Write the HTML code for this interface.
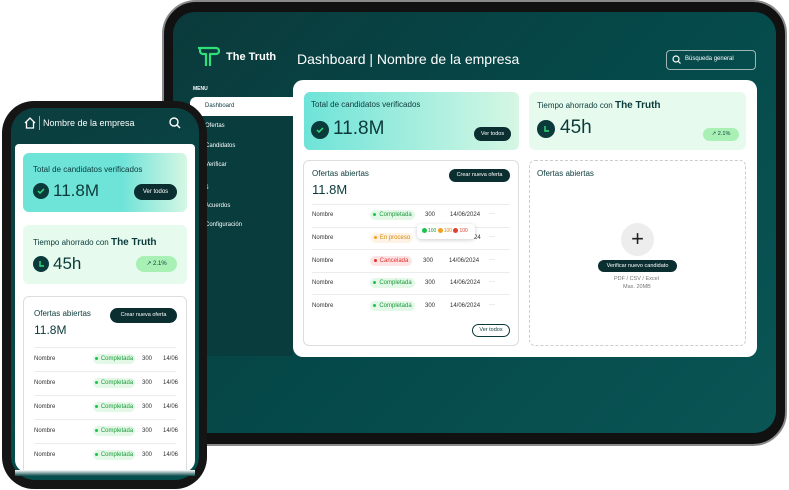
<!DOCTYPE html>
<html><head><meta charset="utf-8"><style>
*{margin:0;padding:0;box-sizing:border-box}
body{width:789px;height:490px;background:#fff;position:relative;overflow:hidden;font-family:"Liberation Sans",sans-serif;}
.a{position:absolute}
.t{position:absolute;white-space:nowrap}
.pill{position:absolute;border-radius:10px;font-size:6px;text-align:center;line-height:10px;height:10px}
.dot{display:inline-block;width:3px;height:3px;border-radius:50%;margin-right:3px;vertical-align:middle}
.row{position:absolute;left:8px;right:8px;height:1px;background:#ececec}
.rt{position:absolute;font-size:6px;color:#333}
</style></head><body>
<!-- tablet -->
<div class="a" style="left:162px;top:0;width:625px;height:446px;border-radius:34px;background:#111;border:2px solid #8a8a8a"></div>
<div class="a" style="left:173px;top:12px;width:603px;height:421px;border-radius:22px;background:linear-gradient(135deg,#0b3a3b 0%,#05494a 50%,#0a5555 100%)"></div>
<!-- logo -->
<svg class="a" style="left:196px;top:46px" width="24" height="22" viewBox="0 0 24 22"><path d="M2 2h18a3 3 0 0 1 0 6h-6v12M4 2v3a3 3 0 0 0 3 3h3v12" fill="none" stroke="#2fe07a" stroke-width="2.2" stroke-linejoin="round"/></svg>
<div class="t" style="left:226px;top:51px;font-size:11px;color:#fff;font-weight:bold">The Truth</div>
<div class="t" style="left:297px;top:51px;font-size:14px;color:#fff">Dashboard | Nombre de la empresa</div>
<div class="a" style="left:666px;top:50px;width:90px;height:20px;border:1px solid #9fb6b5;border-radius:4px"></div>
<svg class="a" style="left:672px;top:55px" width="9" height="9"><circle cx="4" cy="4" r="3" fill="none" stroke="#fff" stroke-width="1.2"/><path d="M6 6l2.5 2.5" stroke="#fff" stroke-width="1.2"/></svg>
<div class="t" style="left:685px;top:56px;font-size:6px;color:#fff">Búsqueda general</div>
<!-- sidebar -->
<div class="t" style="left:193px;top:86px;font-size:5px;color:#fff;font-weight:bold">MENU</div>
<div class="a" style="left:190px;top:116px;width:103px;height:240px;background:#083c3d;border-radius:4px"></div>
<div class="a" style="left:190px;top:97px;width:106px;height:19px;background:#fff;border-radius:6px 0 0 6px"></div>
<div class="t" style="left:205px;top:103px;font-size:6px;color:#0b3a3b">Dashboard</div>
<div class="t" style="left:205px;top:123px;font-size:6px;color:#fff">Ofertas</div>
<div class="t" style="left:205px;top:143px;font-size:6px;color:#fff">Candidatos</div>
<div class="t" style="left:205px;top:162px;font-size:6px;color:#fff">Verificar</div>
<div class="t" style="left:205px;top:185px;font-size:6px;color:#fff">$</div>
<div class="t" style="left:205px;top:203px;font-size:6px;color:#fff">Acuerdos</div>
<div class="t" style="left:205px;top:222px;font-size:6px;color:#fff">Configuración</div>
<!-- main panel -->
<div class="a" style="left:293px;top:80px;width:464px;height:277px;background:#fff;border-radius:10px"></div>
<div class="a" style="left:304px;top:92px;width:215px;height:58px;border-radius:6px;background:linear-gradient(90deg,#6ee3d8,#d6f7e4)"></div>
<div class="t" style="left:311px;top:100px;font-size:8px;color:#0b3a3b">Total de candidatos verificados</div>
<div class="a" style="left:311px;top:121px;width:18px;height:18px;border-radius:50%;background:#0b3a3b"></div>
<svg class="a" style="left:315px;top:125px" width="10" height="10"><path d="M2 5l2 2 4-4" stroke="#2fe07a" stroke-width="1.5" fill="none"/></svg>
<div class="t" style="left:333px;top:118px;font-size:19px;color:#0b3a3b">11.8M</div>
<div class="a" style="left:474px;top:127px;width:37px;height:14px;border-radius:7px;background:#0b2e30;color:#fff;font-size:5.5px;text-align:center;line-height:14px">Ver todos</div>
<div class="a" style="left:529px;top:92px;width:217px;height:58px;border-radius:6px;background:#e6fbee"></div>
<div class="t" style="left:537px;top:100px;font-size:8px;color:#0b3a3b">Tiempo ahorrado con <b style="font-size:10px">The Truth</b></div>
<div class="a" style="left:537px;top:120px;width:18px;height:18px;border-radius:50%;background:#0b3a3b"></div>
<svg class="a" style="left:541px;top:124px" width="10" height="10"><path d="M4 2v5h4" stroke="#2fe07a" stroke-width="1.4" fill="none"/></svg>
<div class="t" style="left:560px;top:117px;font-size:19px;color:#0b3a3b">45h</div>
<div class="a" style="left:703px;top:128px;width:36px;height:13px;border-radius:7px;background:#a8f0b4;font-size:5.5px;text-align:center;line-height:13px;color:#0b3a3b">↗ 2.1%</div>
<!-- ofertas card -->
<div class="a" style="left:303px;top:160px;width:216px;height:186px;border:1px solid #ddd;border-radius:6px">
 <div class="t" style="left:8px;top:8px;font-size:8px;color:#0b3a3b">Ofertas abiertas</div>
 <div class="t" style="left:8px;top:21px;font-size:13px;color:#0b3a3b">11.8M</div>
 <div class="a" style="left:145px;top:8px;width:61px;height:13px;border-radius:7px;background:#0b2e30;color:#fff;font-size:5.5px;text-align:center;line-height:13px">Crear nueva oferta</div>
 <div class="row" style="top:43px"></div><div class="row" style="top:66px"></div><div class="row" style="top:88px"></div><div class="row" style="top:111px"></div><div class="row" style="top:133px"></div>
 <div class="rt" style="left:8px;top:51px">Nombre</div><div class="pill" style="left:66px;top:49px;width:45px;background:#e3f8e7;color:#1a9a3a"><span class="dot" style="background:#1ac24a"></span>Completada</div><div class="rt" style="left:121px;top:51px">300</div><div class="rt" style="left:146px;top:51px">14/06/2024</div><div class="rt" style="left:185px;top:50px;color:#999">···</div>
 <div class="rt" style="left:8px;top:74px">Nombre</div><div class="pill" style="left:67px;top:72px;width:42px;background:#fdf2e3;color:#d9890c"><span class="dot" style="background:#f0a020"></span>En proceso</div><div class="rt" style="left:170px;top:74px">24</div><div class="rt" style="left:185px;top:73px;color:#999">···</div>
 <div class="a" style="left:113px;top:63px;width:58px;height:15px;background:#fff;border-radius:4px;box-shadow:0 1px 4px rgba(0,0,0,.2);font-size:5px;line-height:15px;padding-left:5px"><span class="dot" style="width:5px;height:5px;background:#1ac24a;margin-right:1px"></span><span style="color:#1a9a3a">100 </span><span class="dot" style="width:5px;height:5px;background:#f0a020;margin-right:1px"></span><span style="color:#d9890c">100 </span><span class="dot" style="width:5px;height:5px;background:#e04030;margin-right:1px"></span><span style="color:#e04030">100</span></div>
 <div class="rt" style="left:8px;top:97px">Nombre</div><div class="pill" style="left:66px;top:95px;width:42px;background:#fde3e3;color:#e03030"><span class="dot" style="background:#e03030"></span>Cancelada</div><div class="rt" style="left:119px;top:97px">300</div><div class="rt" style="left:145px;top:97px">14/06/2024</div><div class="rt" style="left:185px;top:96px;color:#999">···</div>
 <div class="rt" style="left:8px;top:119px">Nombre</div><div class="pill" style="left:66px;top:117px;width:45px;background:#e3f8e7;color:#1a9a3a"><span class="dot" style="background:#1ac24a"></span>Completada</div><div class="rt" style="left:121px;top:119px">300</div><div class="rt" style="left:146px;top:119px">14/06/2024</div><div class="rt" style="left:185px;top:118px;color:#999">···</div>
 <div class="rt" style="left:8px;top:142px">Nombre</div><div class="pill" style="left:66px;top:140px;width:45px;background:#e3f8e7;color:#1a9a3a"><span class="dot" style="background:#1ac24a"></span>Completada</div><div class="rt" style="left:121px;top:142px">300</div><div class="rt" style="left:146px;top:142px">14/06/2024</div><div class="rt" style="left:185px;top:141px;color:#999">···</div>
 <div class="a" style="left:168px;top:163px;width:38px;height:13px;border:1px solid #0b3a3b;border-radius:7px;font-size:5.5px;text-align:center;line-height:11px;color:#0b3a3b">Ver todos</div>
</div>
<div class="a" style="left:529px;top:160px;width:217px;height:186px;border:1px dashed #ccc;border-radius:6px"></div>
<div class="t" style="left:537px;top:169px;font-size:8px;color:#0b3a3b">Ofertas abiertas</div>
<div class="a" style="left:621px;top:223px;width:33px;height:33px;border-radius:50%;background:#ededed;font-size:22px;line-height:31px;text-align:center;color:#222">+</div>
<div class="a" style="left:598px;top:260px;width:79px;height:12px;border-radius:6px;background:#0b2e30;color:#fff;font-size:5.5px;text-align:center;line-height:12px">Verificar nuevo candidato</div>
<div class="t" style="left:614px;top:276px;font-size:5.5px;color:#777">PDF / CSV / Excel</div>
<div class="t" style="left:623px;top:284px;font-size:5.5px;color:#777">Max. 20MB</div>

<!-- phone -->
<div class="a" style="left:2px;top:101px;width:205px;height:388px;border-radius:32px;background:#151515"></div>
<div class="a" style="left:11px;top:108px;width:188px;height:372px;border-radius:24px;background:linear-gradient(160deg,#0b3d3e,#05504f)"></div>
<svg class="a" style="left:23px;top:116px" width="14" height="14" viewBox="0 0 14 14"><path d="M2 7l5-5 5 5M3.5 6v6h7V6" fill="none" stroke="#fff" stroke-width="1.3"/></svg>
<div class="a" style="left:39px;top:116px;width:1px;height:14px;background:#9ab"></div>
<div class="t" style="left:43px;top:118px;font-size:9px;color:#fff">Nombre de la empresa</div>
<svg class="a" style="left:169px;top:117px" width="12" height="12"><circle cx="5" cy="5" r="4" fill="none" stroke="#fff" stroke-width="1.4"/><path d="M8 8l3 3" stroke="#fff" stroke-width="1.4"/></svg>
<div class="a" style="left:15px;top:144px;width:180px;height:328px;background:#fff;border-radius:4px 4px 12px 12px"></div>
<div class="a" style="left:23px;top:153px;width:164px;height:59px;border-radius:6px;background:linear-gradient(90deg,#6ee3d8 60%,#d6f7e4)"></div>
<div class="t" style="left:33px;top:165px;font-size:8px;color:#0b3a3b">Total de candidatos verificados</div>
<div class="a" style="left:33px;top:183px;width:16px;height:16px;border-radius:50%;background:#0b3a3b"></div>
<svg class="a" style="left:36px;top:186px" width="10" height="10"><path d="M2 5l2 2 4-4" stroke="#2fe07a" stroke-width="1.5" fill="none"/></svg>
<div class="t" style="left:53px;top:181px;font-size:17px;color:#0b3a3b">11.8M</div>
<div class="a" style="left:134px;top:184px;width:43px;height:16px;border-radius:8px;background:#0b2e30;color:#fff;font-size:6px;text-align:center;line-height:16px">Ver todos</div>
<div class="a" style="left:23px;top:225px;width:164px;height:59px;border-radius:6px;background:#e6fbee"></div>
<div class="t" style="left:33px;top:237px;font-size:8px;color:#0b3a3b">Tiempo ahorrado con <b style="font-size:10px">The Truth</b></div>
<div class="a" style="left:33px;top:256px;width:16px;height:16px;border-radius:50%;background:#0b3a3b"></div>
<svg class="a" style="left:36px;top:259px" width="10" height="10"><path d="M4 2v5h4" stroke="#2fe07a" stroke-width="1.4" fill="none"/></svg>
<div class="t" style="left:53px;top:254px;font-size:17px;color:#0b3a3b">45h</div>
<div class="a" style="left:136px;top:256px;width:41px;height:16px;border-radius:8px;background:#a8f0b4;font-size:6px;text-align:center;line-height:16px;color:#0b3a3b">↗ 2.1%</div>
<div class="a" style="left:23px;top:296px;width:164px;height:180px;border:1px solid #ddd;border-radius:6px;overflow:hidden">
 <div class="t" style="left:10px;top:12px;font-size:8px;color:#0b3a3b">Ofertas abiertas</div>
 <div class="t" style="left:10px;top:26px;font-size:12px;color:#0b3a3b">11.8M</div>
 <div class="a" style="left:86px;top:11px;width:67px;height:15px;border-radius:8px;background:#0b2e30;color:#fff;font-size:5.5px;text-align:center;line-height:15px">Crear nueva oferta</div>
 <div class="row" style="top:50px;left:10px;right:10px"></div><div class="row" style="top:74px;left:10px;right:10px"></div><div class="row" style="top:98px;left:10px;right:10px"></div><div class="row" style="top:122px;left:10px;right:10px"></div><div class="row" style="top:146px;left:10px;right:10px"></div>
 <div class="rt" style="left:10px;top:59px">Nombre</div><div class="pill" style="left:69px;top:57px;width:42px;background:#e3f8e7;color:#1a9a3a"><span class="dot" style="background:#1ac24a"></span>Completada</div><div class="rt" style="left:118px;top:59px">300</div><div class="rt" style="left:139px;top:59px">14/06</div>
 <div class="rt" style="left:10px;top:83px">Nombre</div><div class="pill" style="left:69px;top:81px;width:42px;background:#e3f8e7;color:#1a9a3a"><span class="dot" style="background:#1ac24a"></span>Completada</div><div class="rt" style="left:118px;top:83px">300</div><div class="rt" style="left:139px;top:83px">14/06</div>
 <div class="rt" style="left:10px;top:107px">Nombre</div><div class="pill" style="left:69px;top:105px;width:42px;background:#e3f8e7;color:#1a9a3a"><span class="dot" style="background:#1ac24a"></span>Completada</div><div class="rt" style="left:118px;top:107px">300</div><div class="rt" style="left:139px;top:107px">14/06</div>
 <div class="rt" style="left:10px;top:131px">Nombre</div><div class="pill" style="left:69px;top:129px;width:42px;background:#e3f8e7;color:#1a9a3a"><span class="dot" style="background:#1ac24a"></span>Completada</div><div class="rt" style="left:118px;top:131px">300</div><div class="rt" style="left:139px;top:131px">14/06</div>
 <div class="rt" style="left:10px;top:155px">Nombre</div><div class="pill" style="left:69px;top:153px;width:42px;background:#e3f8e7;color:#1a9a3a"><span class="dot" style="background:#1ac24a"></span>Completada</div><div class="rt" style="left:118px;top:155px">300</div><div class="rt" style="left:139px;top:155px">14/06</div>
</div>
<div class="a" style="left:15px;top:470px;width:180px;height:6px;background:linear-gradient(#fff,#0b4a4a)"></div>
</body></html>
